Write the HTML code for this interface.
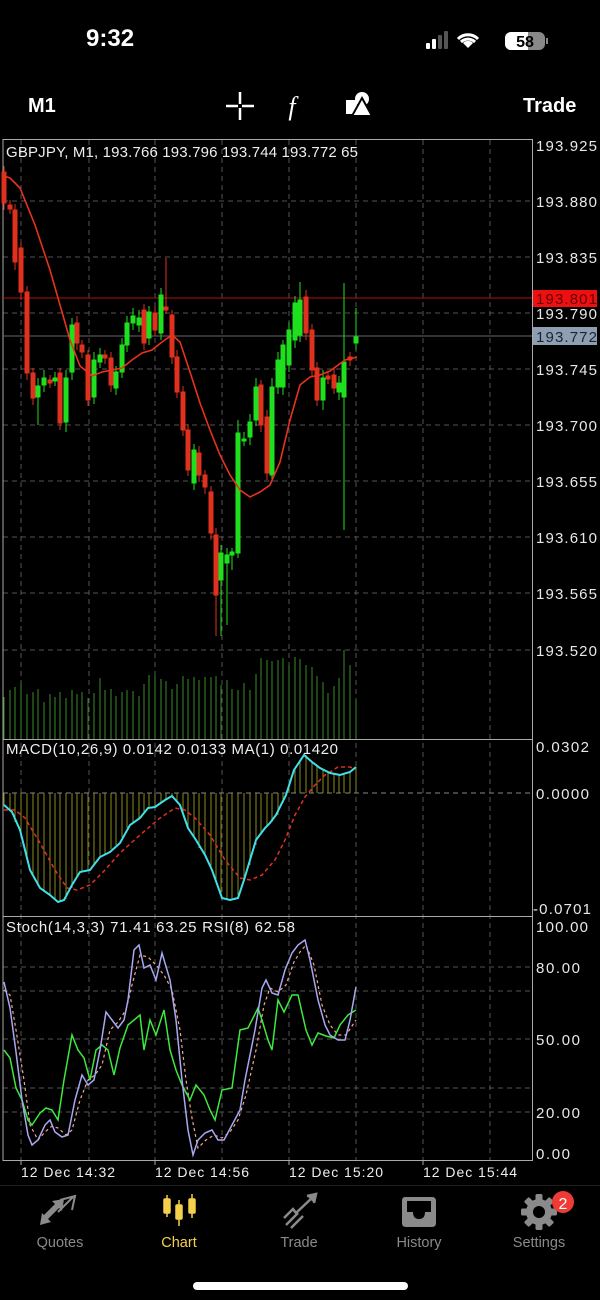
<!DOCTYPE html>
<html><head><meta charset="utf-8">
<style>
html,body{margin:0;padding:0;background:#000;width:600px;height:1300px;overflow:hidden;font-family:"Liberation Sans",sans-serif;color:#fff}
.abs{position:absolute}
</style></head>
<body>
<div class="abs" style="left:86px;top:25px;font-size:24px;font-weight:600">9:32</div>
<svg class="abs" style="left:420px;top:28px" width="130" height="26" viewBox="0 0 130 26">
 <rect x="6" y="15" width="4" height="6" rx="1" fill="#fff"/>
 <rect x="12" y="11" width="4" height="10" rx="1" fill="#fff"/>
 <rect x="18" y="7" width="4" height="14" rx="1" fill="#555"/>
 <rect x="24" y="3" width="4" height="18" rx="1" fill="#555"/>
 <path d="M48 20 L43 15 A7 7 0 0 1 53 15 Z" fill="#fff"/>
 <path d="M38 11 A14 14 0 0 1 58 11" stroke="#fff" stroke-width="3" fill="none"/>
 <path d="M41 14 A10 10 0 0 1 55 14" stroke="#fff" stroke-width="3" fill="none"/>
 <rect x="85" y="4" width="40" height="18" rx="6" fill="#888"/>
 <rect x="85" y="4" width="23" height="18" rx="6" fill="#fff"/>
 <rect x="103" y="4" width="5" height="18" fill="#fff"/>
 <rect x="126" y="10" width="2" height="6" fill="#888"/>
 <text x="105" y="19" font-size="16" font-weight="bold" text-anchor="middle" fill="#000" font-family="Liberation Sans">58</text>
</svg>
<div class="abs" style="left:28px;top:95px;font-size:20px;font-weight:bold">M1</div>
<div class="abs" style="left:523px;top:95px;font-size:20px;font-weight:bold">Trade</div>
<svg class="abs" style="left:220px;top:88px" width="160" height="36">
 <path d="M6 18h12M22 18h12M20 4v12M20 20v12" stroke="#fff" stroke-width="2.5"/>
 <text x="72" y="27" font-size="26" font-style="italic" fill="#fff" font-family="Liberation Serif" text-anchor="middle">f</text>
 <rect x="126" y="12" width="11" height="14" fill="#fff"/>
 <circle cx="142" cy="11" r="7" fill="#fff"/>
 <path d="M142 10 L152 28 H132 Z" fill="#fff" stroke="#000" stroke-width="2"/>
</svg>

<svg class="abs" style="left:0;top:0" width="600" height="1300" font-family="Liberation Sans">
<g stroke="#555" stroke-dasharray="5,4" stroke-width="1">
 <line x1="21" y1="140" x2="21" y2="1160"/><line x1="89" y1="140" x2="89" y2="1160"/>
 <line x1="155" y1="140" x2="155" y2="1160"/><line x1="222" y1="140" x2="222" y2="1160"/>
 <line x1="289" y1="140" x2="289" y2="1160"/><line x1="356" y1="140" x2="356" y2="1160"/>
 <line x1="423" y1="140" x2="423" y2="1160"/><line x1="490" y1="140" x2="490" y2="1160"/>
 <line x1="3" y1="201" x2="532" y2="201"/><line x1="3" y1="257" x2="532" y2="257"/>
 <line x1="3" y1="313" x2="532" y2="313"/><line x1="3" y1="369" x2="532" y2="369"/>
 <line x1="3" y1="425" x2="532" y2="425"/><line x1="3" y1="481" x2="532" y2="481"/>
 <line x1="3" y1="537" x2="532" y2="537"/><line x1="3" y1="593" x2="532" y2="593"/>
 <line x1="3" y1="650" x2="532" y2="650"/>
 <line x1="3" y1="793" x2="532" y2="793" stroke="#888"/>
 <line x1="3" y1="967" x2="532" y2="967"/><line x1="3" y1="991" x2="532" y2="991"/>
 <line x1="3" y1="1039" x2="532" y2="1039"/><line x1="3" y1="1088" x2="532" y2="1088"/>
 <line x1="3" y1="1112" x2="532" y2="1112"/>
</g>
<g stroke="#aaa" stroke-width="1" fill="none">
 <path d="M3 139.5H532.5V1160.5H3Z"/>
 <line x1="3" y1="739.5" x2="532" y2="739.5"/>
 <line x1="3" y1="916.5" x2="532" y2="916.5"/>
</g>
<line x1="3" y1="298" x2="532" y2="298" stroke="#b01010"/>
<line x1="3" y1="336" x2="532" y2="336" stroke="#667"/>

<g stroke="#3d8a2a" stroke-width="1">
<path d="M4 739V697M10 739V690M15 739V687M21 739V683M27 739V694M33 739V692M38 739V689M44 739V702M50 739V694M55 739V697M60 739V692M66 739V698M72 739V690M77 739V694M82 739V692M88 739V698M94 739V693M100 739V678M105 739V690M111 739V689M116 739V696M122 739V692M127 739V690M133 739V691M139 739V696M144 739V684M149 739V675M155 739V676M161 739V679M166 739V681M172 739V689M177 739V684M183 739V676M188 739V679M194 739V677M199 739V680M205 739V677M211 739V677M216 739V676M221 739V685M227 739V680M232 739V689M238 739V690M244 739V683M250 739V690M256 739V674M261 739V658M267 739V660M272 739V661M278 739V660M283 739V658M289 739V665M295 739V657M300 739V659M306 739V665M312 739V667M317 739V676M323 739V682M328 739V693M334 739V686M339 739V678M344 739V650M350 739V665M356 739V700"/>
</g>

<g stroke-width="1">
<g stroke="#e0301e" fill="#e0301e">
<path d="M4 166V210M10 200V214M15 204V270M21 242V300M27 286V380M33 368V405M50 375V388M60 368V430M77 316V350M82 340V358M88 350V406M105 350V364M111 352V392M144 304V350M155 306V336M166 258V314M172 310V364M177 350V398M183 386V436M188 424V476M199 446V482M205 470V494M211 486V540M216 528V636M261 380V432M267 410V480M306 290V340M312 324V376M317 362V406M328 372V384M334 368V394M350 352V366"/>
<rect x="2" y="172" width="4" height="31"/><rect x="8" y="205" width="4" height="4"/><rect x="13" y="210" width="4" height="52"/><rect x="19" y="248" width="4" height="44"/><rect x="25" y="292" width="4" height="81"/><rect x="31" y="373" width="4" height="25"/><rect x="48" y="380" width="4" height="3"/><rect x="58" y="373" width="4" height="50"/><rect x="75" y="323" width="4" height="20"/><rect x="80" y="345" width="4" height="7"/><rect x="86" y="355" width="4" height="45"/><rect x="103" y="355" width="4" height="3"/><rect x="109" y="358" width="4" height="27"/><rect x="142" y="310" width="4" height="33"/><rect x="153" y="313" width="4" height="17"/><rect x="164" y="307" width="4" height="3"/><rect x="170" y="315" width="4" height="42"/><rect x="175" y="357" width="4" height="35"/><rect x="181" y="392" width="4" height="38"/><rect x="186" y="430" width="4" height="40"/><rect x="197" y="453" width="4" height="22"/><rect x="203" y="475" width="4" height="12"/><rect x="209" y="492" width="4" height="41"/><rect x="214" y="535" width="4" height="60"/><rect x="259" y="385" width="4" height="40"/><rect x="265" y="417" width="4" height="56"/><rect x="304" y="297" width="4" height="36"/><rect x="310" y="330" width="4" height="40"/><rect x="315" y="368" width="4" height="32"/><rect x="326" y="376" width="4" height="3"/><rect x="332" y="375" width="4" height="13"/><rect x="348" y="357" width="4" height="3"/>
</g>
<g stroke="#1fe01f" fill="#1fe01f">
<path d="M38 378V425M44 370V392M55 372V386M66 370V432M72 318V380M94 352V404M100 348V368M116 366V395M122 338V378M127 316V352M133 308V330M139 310V332M149 306V345M161 288V340M194 444V490M221 545V636M227 548V625M232 548V570M238 420V558M244 432V446M250 414V445M256 378V426M272 378V482M278 352V394M283 340V395M289 322V372M295 296V348M300 282V342M323 370V410M339 376V400M344 283V530M356 308V350"/>
<rect x="36" y="386" width="4" height="11"/><rect x="42" y="378" width="4" height="7"/><rect x="53" y="378" width="4" height="3"/><rect x="64" y="378" width="4" height="44"/><rect x="70" y="325" width="4" height="47"/><rect x="92" y="360" width="4" height="37"/><rect x="98" y="355" width="4" height="7"/><rect x="114" y="372" width="4" height="16"/><rect x="120" y="345" width="4" height="27"/><rect x="125" y="323" width="4" height="22"/><rect x="131" y="316" width="4" height="7"/><rect x="137" y="318" width="4" height="7"/><rect x="147" y="312" width="4" height="26"/><rect x="159" y="295" width="4" height="38"/><rect x="192" y="450" width="4" height="33"/><rect x="219" y="553" width="4" height="27"/><rect x="225" y="555" width="4" height="8"/><rect x="230" y="552" width="4" height="3"/><rect x="236" y="433" width="4" height="120"/><rect x="242" y="439" width="4" height="2"/><rect x="248" y="422" width="4" height="15"/><rect x="254" y="387" width="4" height="33"/><rect x="270" y="387" width="4" height="88"/><rect x="276" y="360" width="4" height="27"/><rect x="281" y="345" width="4" height="42"/><rect x="287" y="330" width="4" height="35"/><rect x="293" y="303" width="4" height="37"/><rect x="298" y="300" width="4" height="35"/><rect x="321" y="378" width="4" height="22"/><rect x="337" y="383" width="4" height="9"/><rect x="342" y="362" width="4" height="35"/><rect x="354" y="337" width="4" height="6"/>
</g>
</g>
<path d="M4 176 L10 178 L20 188 L35 225 L50 270 L60 305 L70 340 L80 366 L92 376 L102 372 L112 370 L122 368 L132 360 L142 353 L152 350 L162 342 L172 335 L180 342 L190 372 L200 403 L210 430 L220 455 L230 475 L240 490 L250 497 L260 492 L270 485 L280 462 L290 420 L300 385 L310 377 L320 375 L330 371 L345 360 L357 357" stroke="#e8321e" stroke-width="1.6" fill="none"/>

<g stroke="#8a8a20" stroke-width="1">
<path d="M4 793V805M10 793V810M15 793V822M21 793V838M27 793V860M33 793V876M38 793V886M44 793V892M50 793V895M55 793V899M60 793V901M66 793V899M72 793V888M77 793V878M82 793V872M88 793V871M94 793V865M100 793V857M105 793V854M111 793V849M116 793V845M122 793V837M127 793V828M133 793V822M139 793V818M144 793V812M149 793V808M155 793V807M161 793V803M166 793V800M172 793V797M177 793V802M183 793V815M188 793V828M194 793V838M199 793V848M205 793V855M211 793V866M216 793V882M221 793V895M227 793V900M232 793V900M238 793V895M244 793V880M250 793V865M256 793V845M261 793V832M267 793V826M272 793V822M278 793V815M283 793V803M289 793V785M295 793V770M300 793V760M306 793V755M312 793V761M317 793V766M323 793V770M328 793V772M334 793V774M339 793V775M344 793V774M350 793V772M356 793V767"/>
</g>
<path d="M4 810 L15 810 L25 818 L40 843 L55 870 L67 888 L77 890 L90 885 L105 870 L120 853 L140 835 L160 818 L175 808 L185 810 L195 818 L210 835 L225 860 L240 878 L250 880 L262 875 L275 860 L285 840 L295 815 L305 797 L315 785 L325 775 L338 767 L350 767 L356 769" stroke="#e03020" stroke-width="1.5" stroke-dasharray="4,3" fill="none"/>
<path d="M4 805 L12 812 L20 830 L30 870 L40 888 L50 895 L58 902 L64 900 L72 885 L80 872 L90 870 L100 857 L110 852 L120 843 L130 825 L140 818 L148 808 L155 807 L165 800 L172 796 L180 805 L188 828 L196 840 L205 855 L212 870 L222 898 L230 900 L238 898 L244 880 L256 840 L265 828 L270 823 L276 815 L286 795 L294 770 L304 755 L312 762 L320 768 L330 773 L340 775 L350 772 L356 767" stroke="#40e0e8" stroke-width="2" fill="none"/>

<path d="M4 990 L10 995 L16 1030 L24 1080 L30 1125 L38 1140 L45 1132 L52 1126 L58 1128 L66 1135 L72 1130 L80 1100 L88 1080 L95 1075 L102 1065 L110 1030 L118 1022 L126 1010 L132 985 L140 955 L148 957 L156 965 L164 975 L172 990 L180 1030 L186 1080 L192 1118 L198 1148 L206 1140 L214 1135 L222 1138 L230 1132 L238 1120 L246 1095 L256 1050 L264 1005 L270 988 L278 992 L286 985 L294 962 L300 952 L306 945 L314 965 L322 1005 L330 1025 L338 1035 L346 1035 L356 1020" stroke="#f0a890" stroke-width="1.2" stroke-dasharray="3,3" fill="none"/>
<path d="M4 1050 L10 1058 L16 1088 L22 1100 L28 1120 L32 1125 L40 1113 L46 1108 L52 1110 L58 1120 L64 1080 L72 1035 L78 1050 L84 1058 L90 1080 L96 1050 L102 1045 L108 1050 L114 1075 L120 1048 L128 1025 L140 1015 L144 1050 L150 1020 L156 1035 L164 1010 L170 1050 L176 1070 L182 1085 L190 1100 L196 1085 L204 1095 L210 1110 L215 1120 L222 1090 L232 1088 L240 1030 L248 1028 L258 1008 L262 1020 L268 1040 L272 1050 L278 1000 L284 1012 L292 995 L298 995 L306 1030 L312 1045 L318 1033 L326 1036 L334 1038 L340 1025 L348 1015 L356 1010" stroke="#3ee83e" stroke-width="1.5" fill="none"/>
<path d="M4 982 L10 1008 L16 1052 L22 1100 L28 1135 L32 1145 L38 1140 L45 1125 L50 1120 L55 1132 L62 1137 L68 1135 L75 1100 L82 1075 L88 1085 L94 1080 L100 1050 L106 1012 L112 1020 L118 1028 L124 1020 L128 1000 L134 950 L139 945 L144 968 L150 965 L156 980 L162 953 L170 980 L176 1020 L182 1080 L188 1130 L193 1155 L198 1140 L205 1133 L212 1130 L218 1140 L224 1140 L232 1125 L240 1110 L245 1080 L255 1030 L262 988 L266 980 L272 993 L278 995 L285 970 L292 953 L298 945 L305 940 L310 960 L318 1000 L325 1025 L330 1035 L338 1040 L345 1040 L350 1020 L356 987" stroke="#a8a8f0" stroke-width="1.5" fill="none"/>

<g font-size="15" fill="#e8e8e8">
<text x="536" y="151" textLength="61">193.925</text><text x="536" y="207" textLength="61">193.880</text><text x="536" y="263" textLength="61">193.835</text>
<text x="536" y="319" textLength="61">193.790</text><text x="536" y="375" textLength="61">193.745</text><text x="536" y="431" textLength="61">193.700</text>
<text x="536" y="487" textLength="61">193.655</text><text x="536" y="543" textLength="61">193.610</text><text x="536" y="599" textLength="61">193.565</text>
<text x="536" y="656" textLength="61">193.520</text>
<text x="536" y="752" textLength="53">0.0302</text><text x="536" y="799" textLength="53">0.0000</text><text x="533" y="914" textLength="58">-0.0701</text>
<text x="536" y="932" textLength="52">100.00</text><text x="536" y="973" textLength="44">80.00</text><text x="536" y="1045" textLength="44">50.00</text>
<text x="536" y="1118" textLength="44">20.00</text><text x="536" y="1159" textLength="34">0.00</text>
</g>
<rect x="533" y="290" width="64" height="17" fill="#ee1010"/>
<text x="536" y="304" font-size="15" fill="#600" textLength="61">193.801</text>
<rect x="533" y="327" width="64" height="18" fill="#8e9fb3"/>
<text x="536" y="342" font-size="15" fill="#1a2430" textLength="61">193.772</text>
<g font-size="15" fill="#eee">
<text x="6" y="157" textLength="352">GBPJPY, M1, 193.766 193.796 193.744 193.772 65</text>
<text x="6" y="754" textLength="332">MACD(10,26,9) 0.0142 0.0133 MA(1) 0.01420</text>
<text x="6" y="932" textLength="289">Stoch(14,3,3) 71.41 63.25 RSI(8) 62.58</text>
</g>
<g stroke="#aaa"><path d="M21 1160v5M155 1160v5M289 1160v5M423 1160v5"/></g>
<g font-size="14" fill="#eee">
<text x="21" y="1177" textLength="94">12 Dec 14:32</text><text x="155" y="1177" textLength="94">12 Dec 14:56</text>
<text x="289" y="1177" textLength="94">12 Dec 15:20</text><text x="423" y="1177" textLength="94">12 Dec 15:44</text>
</g>
<line x1="0" y1="1185.5" x2="600" y2="1185.5" stroke="#1c1c1c"/>

<g fill="#8a8a8a">
<path d="M44 1215 L55 1204 L52 1201 L64 1199 L62 1211 L59 1208 L48 1219 L51 1222 L40 1225 L42 1213 Z"/>
<path d="M60 1200 L75 1196 L72 1210" stroke="#8a8a8a" stroke-width="2" fill="none"/>
<path d="M73 1197 L58 1212" stroke="#8a8a8a" stroke-width="2"/>
</g>
<g fill="#f5d04a" stroke="#f5d04a" stroke-width="1.5">
<rect x="164" y="1199" width="6" height="14" rx="1"/><line x1="167" y1="1195" x2="167" y2="1217"/>
<rect x="176" y="1205" width="6" height="14" rx="1"/><line x1="179" y1="1200" x2="179" y2="1226"/>
<rect x="189" y="1199" width="6" height="14" rx="1"/><line x1="192" y1="1194" x2="192" y2="1218"/>
</g>
<g stroke="#8a8a8a" stroke-width="2.5" fill="none">
<path d="M284 1218 L293 1209 L296 1213 L314 1196"/><path d="M307 1196 L316 1194 L314 1203" fill="#8a8a8a"/>
<path d="M286 1225 L298 1213"/><path d="M291 1228 L303 1216"/>
</g>
<path d="M405 1197 Q402 1197 402 1201 V1223 Q402 1227 406 1227 H432 Q436 1227 436 1223 V1201 Q436 1197 432 1197 Z M407 1201 H431 V1212 H425 Q425 1219 419 1219 Q413 1219 413 1212 H407 Z" fill="#8a8a8a" fill-rule="evenodd"/>
<g transform="translate(539 1212)">
<circle r="13" fill="#8a8a8a"/>
<g fill="#8a8a8a"><rect x="-3.5" y="-18" width="7" height="36" rx="1.5"/><rect x="-3.5" y="-18" width="7" height="36" rx="1.5" transform="rotate(45)"/><rect x="-3.5" y="-18" width="7" height="36" rx="1.5" transform="rotate(90)"/><rect x="-3.5" y="-18" width="7" height="36" rx="1.5" transform="rotate(135)"/></g>
<circle r="6" fill="#000"/>
</g>
<circle cx="563" cy="1202" r="11" fill="#ee3b36"/>
<text x="563" y="1209" font-size="16" fill="#fff" text-anchor="middle">2</text>
<g font-size="14.5" fill="#8a8a8a" text-anchor="middle">
<text x="60" y="1247">Quotes</text><text x="179" y="1247" fill="#f5d04a">Chart</text>
<text x="299" y="1247">Trade</text><text x="419" y="1247">History</text><text x="539" y="1247">Settings</text>
</g>
<rect x="193" y="1282" width="215" height="8" rx="4" fill="#fff"/>
</svg>
</body></html>
